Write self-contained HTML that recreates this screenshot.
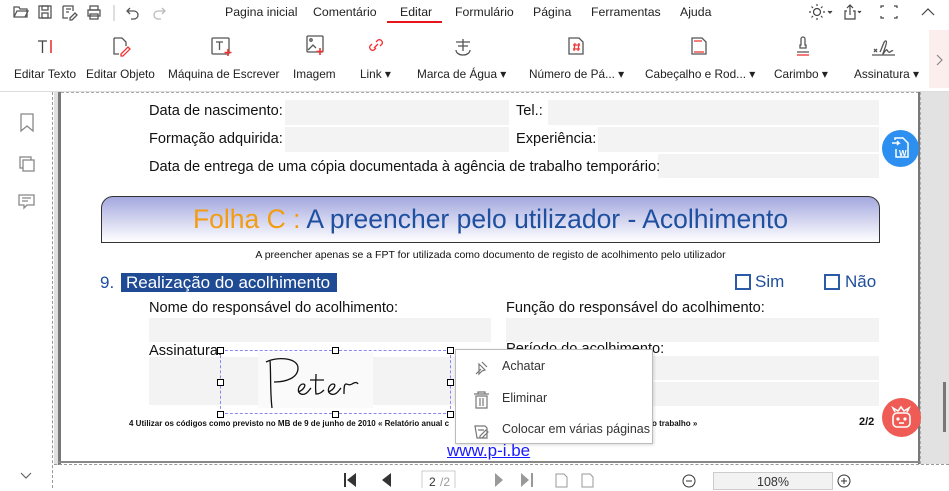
<!DOCTYPE html>
<html><head><meta charset="utf-8"><style>
*{box-sizing:border-box;margin:0;padding:0}
body{width:949px;height:488px;overflow:hidden;background:#fff;font-family:"Liberation Sans",Arial,sans-serif;position:relative;color:#222}
.a{position:absolute}
.tab{position:absolute;top:5px;font-size:12.3px;color:#222}
.rl{position:absolute;top:67px;font-size:11.8px;color:#222;white-space:nowrap}
.f{position:absolute;background:#f3f3f3}
.t{position:absolute;font-size:14.6px;color:#111;white-space:nowrap}
.h{position:absolute;width:7px;height:7px;border:1px solid #000;background:#fff}
.mi{position:absolute;left:46px;font-size:12.5px;color:#333}
</style></head><body>
<svg class="a" style="left:0;top:0" width="340" height="26" viewBox="0 0 340 26" fill="none" stroke="#555" stroke-width="1.3">
<path d="M14 7h5l1 2h7v8H14z M14 17l3-6h11l-3 6"/>
<rect x="39" y="6" width="12" height="12"/><rect x="42" y="6" width="6" height="4"/><rect x="42" y="13" width="6" height="5"/>
<path d="M63 6h10v5 M63 6v12h5 M66 9h5 M66 12h3 M70 18l5-5 2 2-5 5h-2z"/>
<rect x="88" y="10" width="12" height="6"/><rect x="90" y="6" width="8" height="4"/><rect x="90" y="14" width="8" height="5"/>
<path d="M114 5v16" stroke="#ccc"/>
<path d="M130 8l-3 3 3 3 M127 11h7a4 4 0 0 1 0 8h-3"/>
<path d="M162 8l3 3-3 3 M165 11h-7a4 4 0 0 0 0 8h3" stroke="#bbb"/>
</svg>
<div class="tab" style="left:225px">Pagina inicial</div>
<div class="tab" style="left:313px">Comentário</div>
<div class="tab" style="left:400px">Editar</div>
<div class="a" style="left:387px;top:21px;width:55px;height:2px;background:#e8141c"></div>
<div class="tab" style="left:455px">Formulário</div>
<div class="tab" style="left:533px">Página</div>
<div class="tab" style="left:591px">Ferramentas</div>
<div class="tab" style="left:680px">Ajuda</div>
<svg class="a" style="left:805px;top:0" width="144" height="26" fill="none" stroke="#444" stroke-width="1.2">
<circle cx="12" cy="12" r="3.5"/><path d="M12 4v2M12 18v2M4 12h2M18 12h2M6.5 6.5l1.5 1.5M16 16l1.5 1.5M6.5 17.5L8 16M16 8l1.5-1.5"/>
<path d="M23 11l2 2 2-2" fill="#444"/>
<path d="M42 11h-2v8h10v-8h-2 M45 15V5 M42 8l3-3 3 3"/><path d="M53 11l1.5 1.5 1.5-1.5" fill="#444"/>
<path d="M76 8V6h3 M89 6h3v2 M76 16v2h3 M89 18h3v-2"/>
<path d="M117 15l6-6 6 6"/>
</svg>
<svg class="a" style="left:0;top:30px" width="949" height="36" fill="none" stroke="#555" stroke-width="1.3">
<path d="M38 11h9 M42.5 11v12" stroke="#444"/><path d="M51 10v13" stroke="#e33" stroke-width="1.6"/>
<path d="M114 8h8l4 4v4 M114 8v16h5" /><path d="M121 24l7-7 2 2-7 7h-2z" stroke="#e33"/>
<rect x="212" y="8" width="17" height="16" rx="1"/><path d="M216 12h7 M219.5 12v8"/><path d="M228 19v7M224.5 22.5h7" stroke="#e33" stroke-width="1.6"/>
<rect x="307" y="6" width="16" height="16" rx="1"/><circle cx="311" cy="10" r="1.2"/><path d="M308 20l5-5 3 3"/><path d="M320 18v7M316.5 21.5h7" stroke="#e33" stroke-width="1.6"/>
<path d="M372 14l-2 2a3 3 0 0 0 4 4l2-2 M380 16l2-2a3 3 0 0 0-4-4l-2 2 M374 18l4-4" stroke="#e33"/>
<path d="M456 12h14 M458 16h10 M463 9v12 M456 20a7 5 0 0 0 14 0"/>
<path d="M569 8h10l4 4v12h-14z"/><path d="M573 15h7M573 19h7M575 13l-1 8M579 13l-1 8" stroke="#e33"/>
<path d="M692 8h10l4 4v12h-14z"/><path d="M694 11h8M694 22h10" stroke="#e33"/>
<path d="M797 22h12 M800 18h6v-3h-1v-6a2 2 0 0 0-4 0v6h-1z"/><path d="M797 25h12" stroke="#e33"/>
<path d="M874 19l3 3M877 19l-3 3 M880 22c3-6 4-12 6-11s-4 14-3 13 3-5 4-4 1 3 3 2 2-2 3-1"/><path d="M872 25h23"/>
</svg>
<div class="a" style="left:929px;top:30px;width:20px;height:58px;background:#fdeeee"></div>
<svg class="a" style="left:929px;top:52px" width="20" height="16" fill="none" stroke="#888" stroke-width="1.2"><path d="M8 3l5 5-5 5"/></svg>
<div class="rl" style="left:14px">Editar Texto</div>
<div class="rl" style="left:86px">Editar Objeto</div>
<div class="rl" style="left:168px">Máquina de Escrever</div>
<div class="rl" style="left:293px">Imagem</div>
<div class="rl" style="left:360px">Link ▾</div>
<div class="rl" style="left:417px">Marca de Água ▾</div>
<div class="rl" style="left:529px">Número de Pá... ▾</div>
<div class="rl" style="left:645px">Cabeçalho e Rod... ▾</div>
<div class="rl" style="left:774px">Carimbo ▾</div>
<div class="rl" style="left:854px">Assinatura ▾</div>
<div class="a" style="left:0;top:91px;width:949px;height:1px;background:#ddd"></div>
<div class="a" style="left:0;top:92px;width:53px;height:396px;background:#fff;border-right:1px dashed #999"></div>
<svg class="a" style="left:14px;top:110px" width="28" height="105" fill="none" stroke="#888" stroke-width="1.3">
<path d="M7 4h12v17l-6-5-6 5z"/>
<rect x="6" y="47" width="11" height="11"/><rect x="9" y="50" width="11" height="11" fill="#fff"/>
<path d="M5 85h15v10h-7l-3 3v-3H5z M8 88h9M8 91h6"/>
</svg>
<svg class="a" style="left:18px;top:470px" width="16" height="12" fill="none" stroke="#666" stroke-width="1.2"><path d="M3 3l5 5 5-5"/></svg>
<div class="a" style="left:54px;top:92px;width:6px;height:373px;background:#e0e0e0"></div>
<div class="a" style="left:58px;top:92px;width:3px;height:373px;background:#777"></div>
<div class="a" style="left:61px;top:92px;width:858px;height:370px;background:#fff;border-top:1px dashed #aaa"></div>
<div class="a" style="left:918px;top:92px;width:2px;height:372px;background:#777"></div>
<div class="a" style="left:920px;top:92px;width:29px;height:372px;background:#e2e2e2;border-left:1px dashed #aaa"></div>
<div class="a" style="left:943px;top:382px;width:3px;height:50px;background:#777"></div>
<div class="a" style="left:58px;top:461px;width:862px;height:2px;background:#888"></div>
<div class="a" style="left:54px;top:464px;width:895px;height:1px;border-top:1px dashed #999"></div>
<div class="f" style="left:285px;top:100px;width:224px;height:25px"></div>
<div class="f" style="left:548px;top:100px;width:331px;height:25px"></div>
<div class="f" style="left:285px;top:127px;width:224px;height:25px"></div>
<div class="f" style="left:598px;top:127px;width:281px;height:25px"></div>
<div class="f" style="left:658px;top:154px;width:221px;height:24px"></div>
<div class="t" style="left:149px;top:103px">Data de nascimento:</div>
<div class="t" style="left:516px;top:103px">Tel.:</div>
<div class="t" style="left:149px;top:131px">Formação adquirida:</div>
<div class="t" style="left:516px;top:131px">Experiência:</div>
<div class="t" style="left:149px;top:159px">Data de entrega de uma cópia documentada à agência de trabalho temporário:</div>
<div class="a" style="left:101px;top:196px;width:779px;height:47px;border:1px solid #333;border-radius:12px 12px 0 0;background:linear-gradient(#a4a8de,#fff);text-align:center;font-size:26.5px;line-height:44px;color:#1f50a0;white-space:nowrap"><span style="color:#f39c12">Folha C :</span> A preencher pelo utilizador - Acolhimento</div>
<div class="a" style="left:101px;top:249px;width:779px;text-align:center;font-size:10.5px;color:#111;white-space:nowrap">A preencher apenas se a FPT for utilizada como documento de registo de acolhimento pelo utilizador</div>
<div class="a" style="left:100px;top:273px;font-size:17px;color:#1f4e9c">9.</div>
<div class="a" style="left:121px;top:273px;width:216px;height:19px;background:#1f4b94;color:#fff;font-size:17px;line-height:19px;padding-left:5px">Realização do acolhimento</div>
<div class="a" style="left:735px;top:274px;width:16px;height:16px;border:2px solid #2a5aa8"></div>
<div class="a" style="left:755px;top:272px;font-size:17px;color:#1f4e9c">Sim</div>
<div class="a" style="left:824px;top:274px;width:16px;height:16px;border:2px solid #2a5aa8"></div>
<div class="a" style="left:845px;top:272px;font-size:17px;color:#1f4e9c">Não</div>
<div class="t" style="left:149px;top:300px">Nome do responsável do acolhimento:</div>
<div class="t" style="left:506px;top:300px">Função do responsável do acolhimento:</div>
<div class="f" style="left:149px;top:318px;width:342px;height:24px"></div>
<div class="f" style="left:506px;top:318px;width:373px;height:24px"></div>
<div class="t" style="left:149px;top:343px">Assinatura:</div>
<div class="t" style="left:506px;top:341px">Período do acolhimento:</div>
<div class="f" style="left:149px;top:357px;width:342px;height:48px"></div>
<div class="f" style="left:506px;top:356px;width:373px;height:24px"></div>
<div class="f" style="left:506px;top:382px;width:373px;height:24px"></div>
<div class="a" style="left:258px;top:352px;width:115px;height:56px;background:#fafafa"></div>
<svg class="a" style="left:258px;top:352px" width="115" height="60" fill="none" stroke="#111" stroke-width="1.3">
<path d="M14 56C12 40 13 20 12 8 M8 10C20 4 40 6 40 16S28 30 16 30 M40 40c6-2 9-8 5-8s-7 8-2 10 8-4 10-6 M58 22c0 8-1 14 0 20 4 0 6-2 8-4 M52 28h14 M70 40c6-2 9-8 5-8s-7 8-2 10 8-4 10-6 M86 42c0-6 0-10 2-10s3 2 6 0 5-2 6 0"/>
</svg>
<div class="a" style="left:220px;top:350px;width:231px;height:64px;border:1.5px dashed #8888ee"></div>
<div class="h" style="left:217px;top:347px"></div><div class="h" style="left:332px;top:347px"></div><div class="h" style="left:447px;top:347px"></div>
<div class="h" style="left:217px;top:379px"></div><div class="h" style="left:447px;top:379px"></div>
<div class="h" style="left:217px;top:411px"></div><div class="h" style="left:332px;top:411px"></div><div class="h" style="left:447px;top:411px"></div>
<div class="a" style="left:129px;top:419px;font-size:8px;font-weight:bold;color:#111;white-space:nowrap">4 Utilizar os códigos como previsto no MB de 9 de junho de 2010 « Relatório anual c</div>
<div class="a" style="left:652px;top:419px;font-size:8px;font-weight:bold;color:#111">o trabalho »</div>
<div class="a" style="left:859px;top:416px;font-size:11px;font-weight:bold;color:#111">2/2</div>
<div class="a" style="left:447px;top:441px;font-size:17px;color:#1a1aff;text-decoration:underline">www.p-i.be</div>
<div class="a" style="left:455px;top:349px;width:198px;height:95px;background:#fff;border:1px solid #bbb;box-shadow:1px 1px 3px rgba(0,0,0,.15)">
<svg class="a" style="left:16px;top:8px" width="20" height="86" fill="none" stroke="#777" stroke-width="1.2">
<path d="M4 16l5-5 M7 6l6 6-3 1-3 3z M10 4l5 5"/>
<path d="M2 36h15 M6 36v-2h7v2 M4 38h11v12H4z M8 40v8M11 40v8"/>
<path d="M3 68h10l2 2v10H5z M6 72h6 M8 78l6-6 2 2-6 6h-2z"/>
</svg>
<div class="mi" style="top:9px">Achatar</div>
<div class="mi" style="top:41px">Eliminar</div>
<div class="mi" style="top:72px">Colocar em várias páginas</div>
</div>
<div class="a" style="left:882px;top:130px;width:37px;height:37px;border-radius:50%;background:#2d8ff0"></div>
<svg class="a" style="left:882px;top:130px" width="37" height="37" fill="none" stroke="#fff" stroke-width="1.5"><path d="M10 13h7l-2-2M17 13l-2 2 M13 10V8h8l5 5v14H14v-8"/><text x="17" y="26" font-size="8" fill="#fff" stroke="none" font-family="Liberation Sans" font-weight="bold">W</text></svg>
<div class="a" style="left:882px;top:398px;width:39px;height:39px;border-radius:50%;background:#ef5b55"></div>
<svg class="a" style="left:882px;top:398px" width="39" height="39" fill="none" stroke="#fff" stroke-width="1.6"><rect x="11" y="15" width="17" height="14" rx="4"/><path d="M13 14l-2-4 5 3 3-4 3 4 5-3-2 4"/><circle cx="16" cy="21" r=".8" fill="#fff"/><circle cx="23" cy="21" r=".8" fill="#fff"/><path d="M17 25h5"/></svg>
<svg class="a" style="left:330px;top:466px" width="560" height="22">
<rect x="14" y="7" width="2" height="14" fill="#333"/><path d="M26 7v14l-9-7z" fill="#333"/>
<path d="M61 7v14l-9-7z" fill="#333"/>
<rect x="92" y="5" width="33" height="20" fill="#fff" stroke="#ccc"/>
<text x="99" y="20" font-size="12" font-family="Liberation Sans" fill="#333">2</text><text x="110" y="20" font-size="12" font-family="Liberation Sans" fill="#999">/2</text>
<path d="M165 7v14l8-7z" fill="#999"/>
<path d="M191 7v14l8-7z" fill="#999"/><rect x="201" y="7" width="2" height="14" fill="#999"/>
<g fill="none" stroke="#999"><path d="M226 8h8l3 3v10h-11z"/><path d="M252 8h8l3 3v10h-11z"/>
<circle cx="359" cy="15" r="6" stroke="#333"/><path d="M356 15h6" stroke="#333"/>
<circle cx="514" cy="15" r="6" stroke="#333"/><path d="M511 15h6M514 12v6" stroke="#333"/></g>
</svg>
<div class="a" style="left:713px;top:472px;width:120px;height:18px;background:#f2f2f2;border:1px solid #ccc;text-align:center;font-size:12.5px;color:#333;line-height:18px">108%</div>
</body></html>
